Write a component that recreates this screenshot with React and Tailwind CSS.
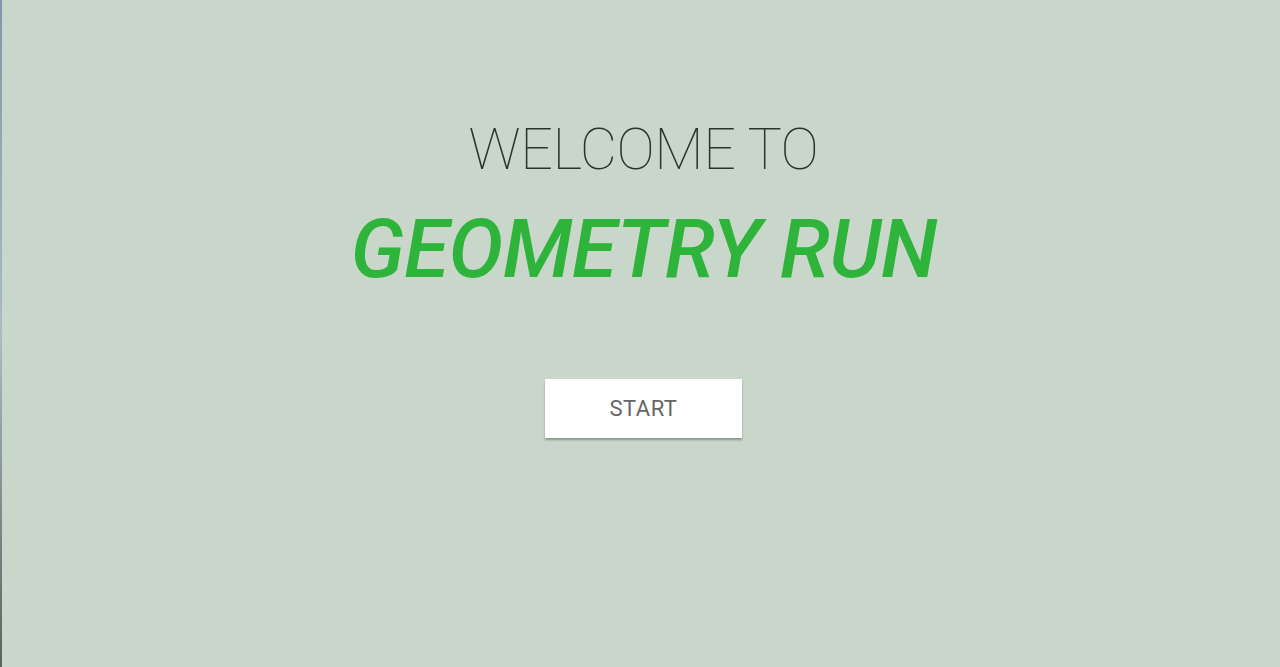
export default function App() {
  return (
    <div className="flex h-[667px] w-full bg-[#c8d7c9]" style={{ fontFamily: 'Roboto, "Liberation Sans", sans-serif' }}>
      <div className="w-[2px] h-full bg-gradient-to-b from-[#7f97a8] via-[#a9bcc4] to-[#5e625e]"></div>
      <div className="flex-1 flex flex-col items-center pt-[114px] pl-[5px]">
        <h2 className="text-[57.5px] leading-[72px] font-thin text-[#2b332c] tracking-[-0.5px]">WELCOME TO</h2>
        <h1 className="mt-[15px] text-[82px] leading-[96px] font-medium italic text-[#2eb43a] tracking-[-0.6px]">GEOMETRY RUN</h1>
        <button className="mt-[82px] w-[197px] h-[59px] bg-white text-[#666] text-[22px] tracking-[0.5px] shadow-[0_2px_2px_rgba(0,0,0,0.3)]">
          START
        </button>
      </div>
    </div>
  );
}
